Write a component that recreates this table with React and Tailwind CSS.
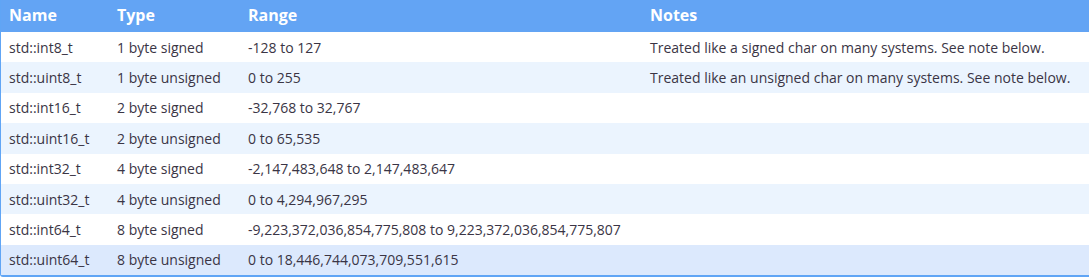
import React from "react";

const rows = [
  ["std::int8_t", "1 byte signed", "-128 to 127", "Treated like a signed char on many systems. See note below."],
  ["std::uint8_t", "1 byte unsigned", "0 to 255", "Treated like an unsigned char on many systems. See note below."],
  ["std::int16_t", "2 byte signed", "-32,768 to 32,767", ""],
  ["std::uint16_t", "2 byte unsigned", "0 to 65,535", ""],
  ["std::int32_t", "4 byte signed", "-2,147,483,648 to 2,147,483,647", ""],
  ["std::uint32_t", "4 byte unsigned", "0 to 4,294,967,295", ""],
  ["std::int64_t", "8 byte signed", "-9,223,372,036,854,775,808 to 9,223,372,036,854,775,807", ""],
  ["std::uint64_t", "8 byte unsigned", "0 to 18,446,744,073,709,551,615", ""],
];

export default function App() {
  return (
    <div
      className="w-[1089px] h-[277px] bg-white overflow-hidden"
      style={{ fontFamily: '"Open Sans", "Noto Sans", sans-serif' }}
    >
      <div className="border-l border-b-2 border-[#60a5f5] rounded-bl-[3px] overflow-hidden">
        <table className="w-full border-collapse table-fixed">
          <colgroup>
            <col className="w-[108px]" />
            <col className="w-[131px]" />
            <col className="w-[402px]" />
            <col />
          </colgroup>
          <thead>
            <tr className="bg-[#63a4f4] h-[32px] text-white text-[16px] font-bold text-left">
              <th className="pl-[8px] pb-[2px]">Name</th>
              <th className="pl-[8px] pb-[2px]">Type</th>
              <th className="pl-[8px] pb-[2px]">Range</th>
              <th className="pl-[8px] pb-[2px]">Notes</th>
            </tr>
          </thead>
          <tbody className="text-[14px] text-[#3a3545]">
            {rows.map((r, i) => {
              const bg =
                i === rows.length - 1
                  ? "bg-[#dce9fd]"
                  : i % 2 === 0
                  ? "bg-white"
                  : "bg-[#ebf4fe]";
              return (
                <tr key={i} className={`${bg} h-[30.375px]`}>
                  {r.map((c, j) => (
                    <td key={j} className="pl-[8px] whitespace-nowrap">
                      {c}
                    </td>
                  ))}
                </tr>
              );
            })}
          </tbody>
        </table>
      </div>
    </div>
  );
}
